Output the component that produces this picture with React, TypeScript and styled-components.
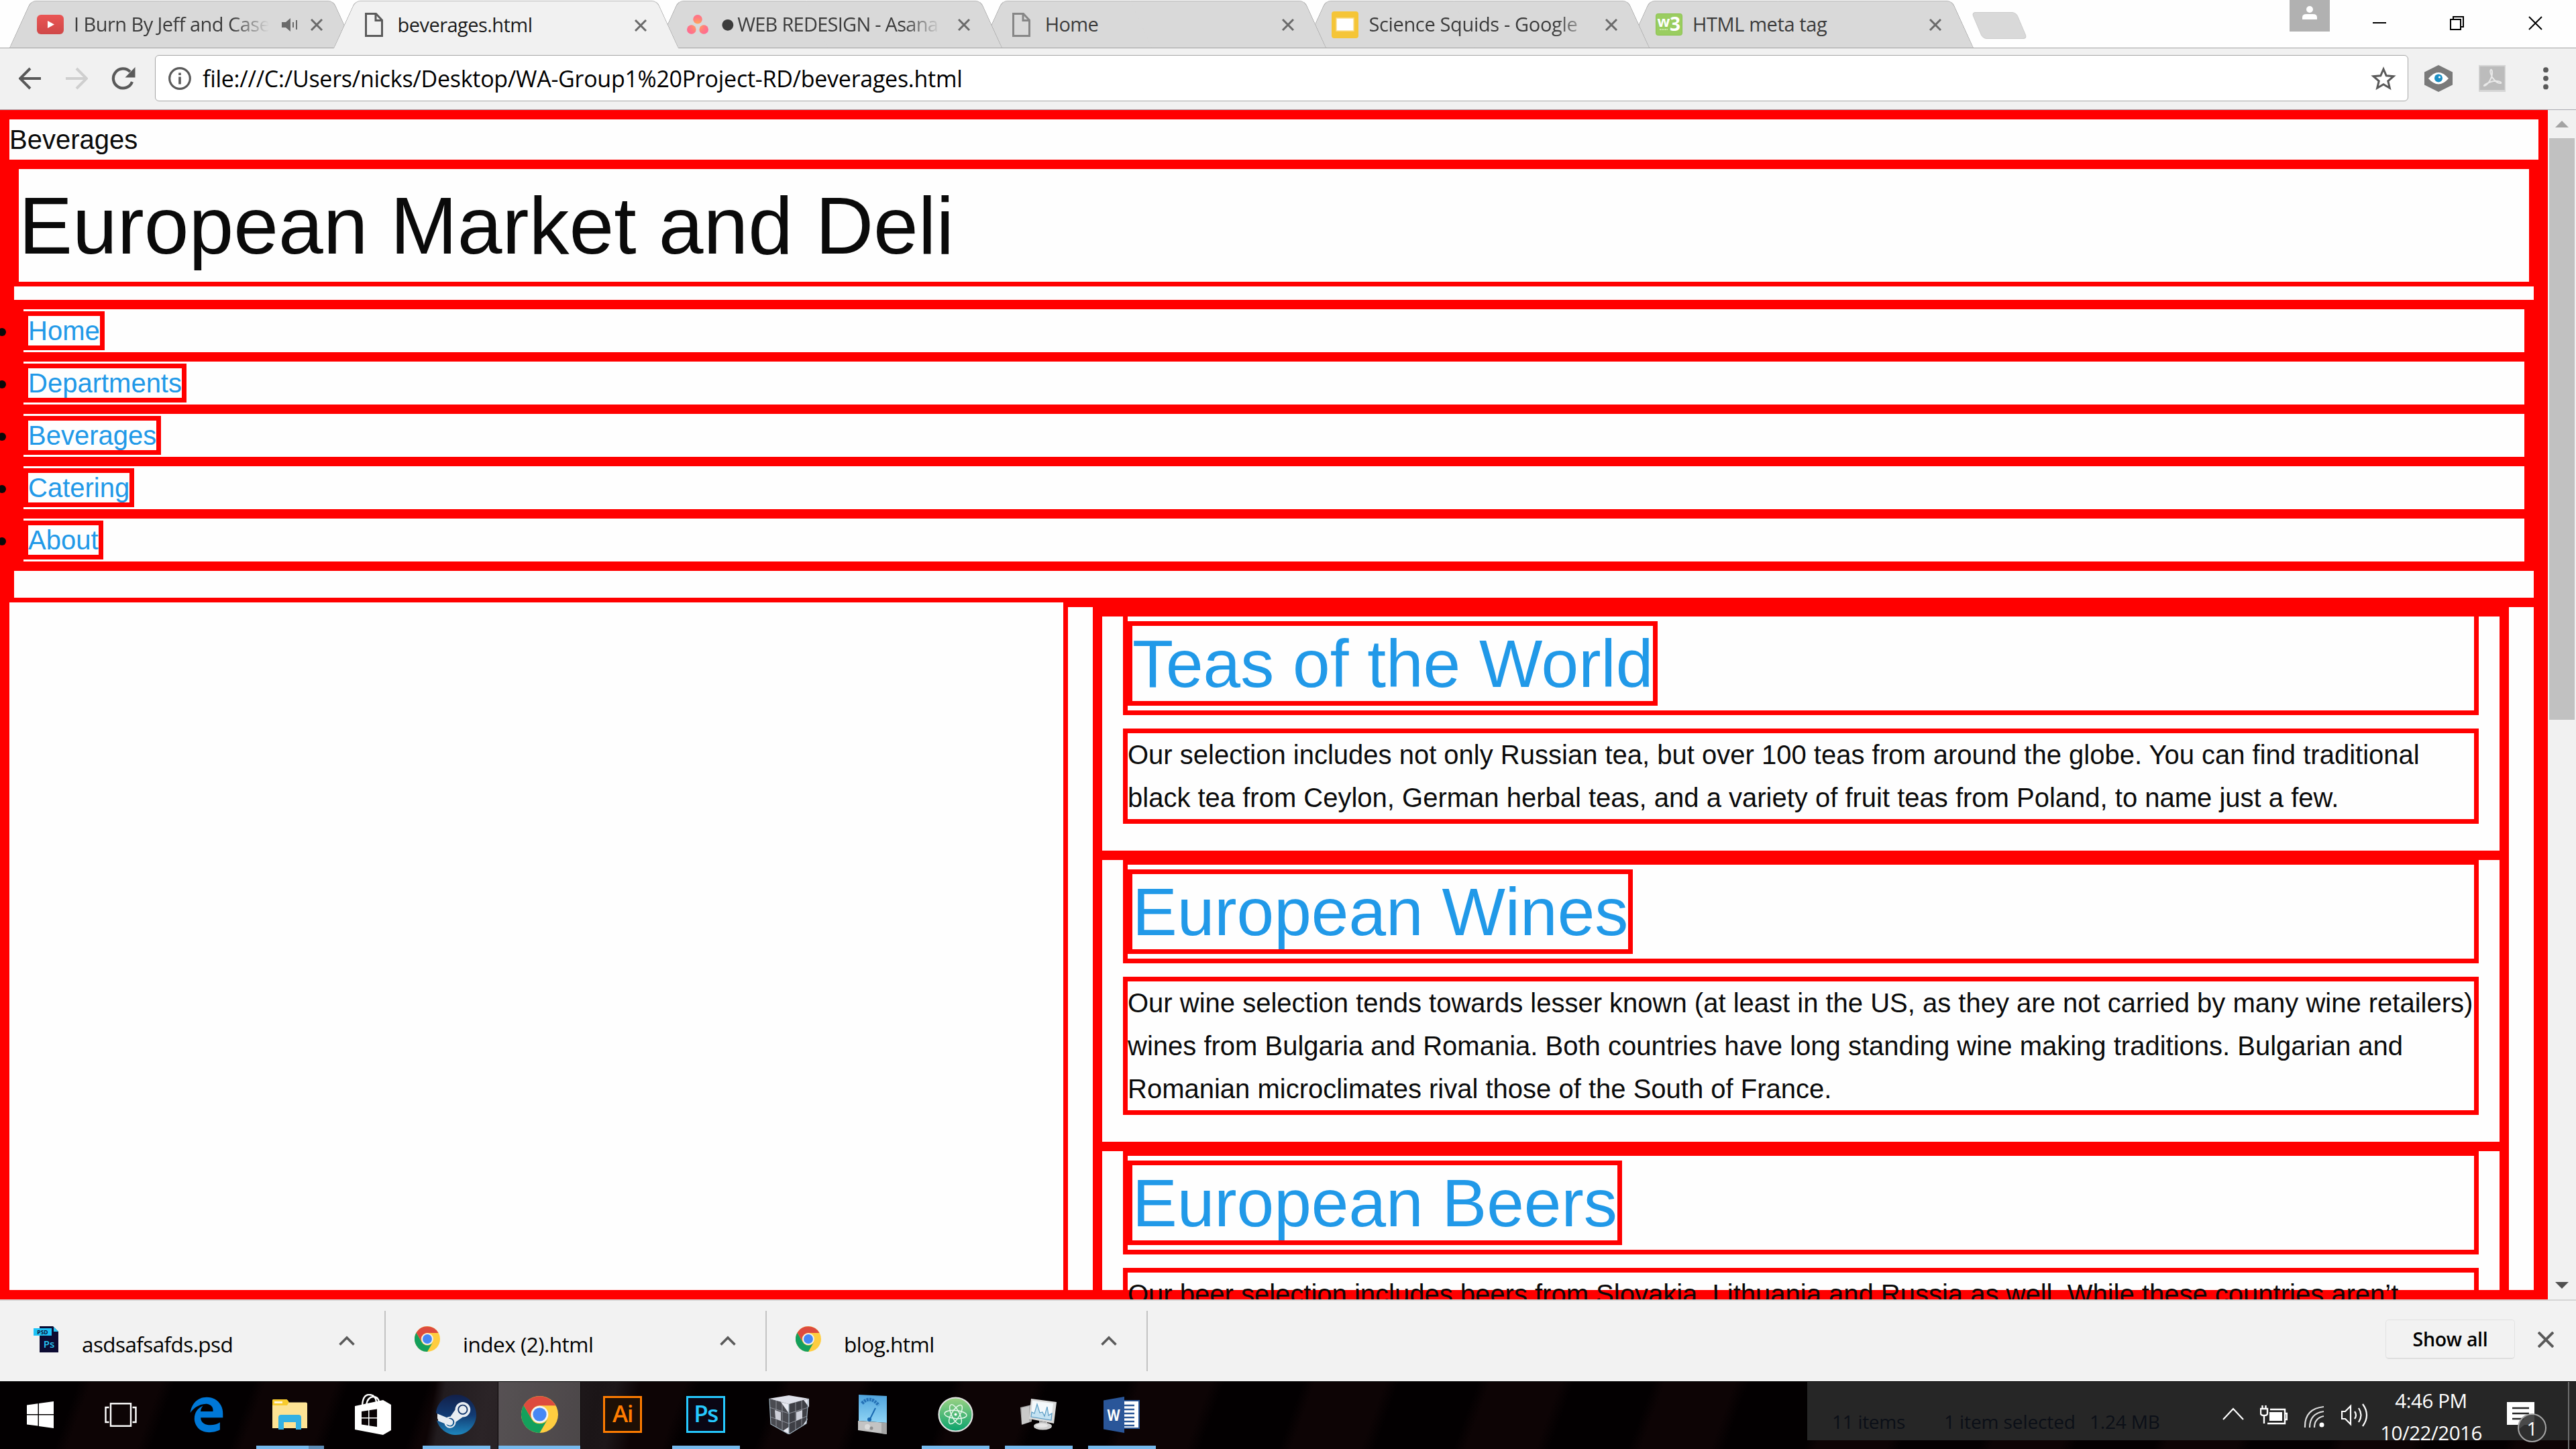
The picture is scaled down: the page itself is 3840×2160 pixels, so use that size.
import React from 'react';
import styled, { createGlobalStyle, css } from 'styled-components';
import { FaEdgeLegacy, FaSteam } from 'react-icons/fa';

const UI = `"Open Sans", "Noto Sans", sans-serif`;
const RED = '#ff0000';

const Global = createGlobalStyle`
  *, *::before, *::after { box-sizing: border-box; }
  body { margin: 0; background: #fefefe; overflow: hidden; }
`;

const Screen = styled.div`
  width: 3840px;
  height: 2160px;
  display: flex;
  flex-direction: column;
  overflow: hidden;
  font-family: ${UI};
`;

/* ---------- text with tuned tracking ---------- */
const Label = styled.span<{ $size: number; $ls?: number; $color?: string; $weight?: number; $grow?: boolean }>`
  font-size: ${p => p.$size}px;
  letter-spacing: ${p => p.$ls ?? 0}px;
  color: ${p => p.$color ?? '#000'};
  font-weight: ${p => p.$weight ?? 400};
  line-height: 1;
  white-space: pre;
  ${p => p.$grow && css`flex: 1;`}
`;

/* ---------- tab strip ---------- */
const TabStrip = styled.div`
  height: 72px;
  flex: none;
  display: flex;
  padding-left: 14px;
  background: #fefefe;
  border-bottom: 1px solid #9f9f9f;
`;

const TabBox = styled.div<{ $active?: boolean; $z: number }>`
  position: relative;
  z-index: ${p => p.$z};
  width: 515px;
  height: ${p => (p.$active ? 72 : 71)}px;
  margin-right: -32.4px;
  flex: none;
  display: flex;
  align-items: center;
  padding-left: 41px;
  &::before, &::after {
    content: '';
    position: absolute;
    z-index: -1;
    top: 1px;
    bottom: 0;
    width: 50.5%;
    background: ${p => (p.$active ? '#f1f1f1' : '#d9d9d9')};
    border-top: 1px solid #b9b9b9;
  }
  &::before {
    left: 0;
    border-left: 1px solid #a6a6a6;
    border-top-left-radius: 8px;
    transform-origin: left bottom;
    transform: skewX(-24.5deg);
  }
  &::after {
    right: 0;
    border-right: 1px solid #a6a6a6;
    border-top-right-radius: 8px;
    transform-origin: right bottom;
    transform: skewX(24.5deg);
  }
`;

const TabIcon = styled.div`
  width: 40px;
  height: 44px;
  margin-top: 2px;
  display: grid;
  place-items: center;
`;

const TabTitle = styled.div<{ $w: number; $fade?: boolean }>`
  width: ${p => p.$w}px;
  margin-left: 15px;
  overflow: hidden;
  white-space: nowrap;
  height: 60px;
  display: flex;
  align-items: center;
  ${p => p.$fade && css`mask-image: linear-gradient(to right, #000 calc(100% - 56px), transparent 100%);`}
`;

const Bullet = styled.span`
  font: 22px/1 "DejaVu Sans", sans-serif;
  color: #3c3c3c;
  width: 24px;
  flex: none;
`;

const TabEnd = styled.div`
  margin-left: auto;
  margin-right: 48px;
  display: flex;
  align-items: center;
  gap: 19px;
  padding-top: 3px;
`;

const NewTab = styled.div`
  width: 67px;
  height: 40px;
  margin: 18px 0 0 37px;
  background: #d9d9d9;
  border: 1px solid #cbcbcb;
  border-radius: 6px;
  transform: skewX(23deg);
`;

const WindowControls = styled.div`
  margin-left: auto;
  display: flex;
  align-items: flex-start;
`;
const Avatar = styled.div`
  width: 60px;
  height: 47px;
  margin-right: 15px;
  background: #b1b1b1;
  display: flex;
  justify-content: center;
  padding-top: 9px;
`;
const ControlSlot = styled.div<{ $w: number }>`
  width: ${p => p.$w}px;
  height: 68px;
  display: grid;
  place-items: center;
`;

/* ---------- toolbar ---------- */
const Toolbar = styled.div`
  height: 92px;
  flex: none;
  display: flex;
  align-items: center;
  padding: 0 36px 2px 28px;
  background: #f1f1f1;
  border-bottom: 1px solid #a9a9b0;
`;
const Nav = styled.div`
  width: 203px;
  display: flex;
  gap: 35px;
`;
const Omnibox = styled.div`
  flex: 1;
  height: 69px;
  display: flex;
  align-items: center;
  padding: 0 17px 0 19px;
  gap: 17px;
  background: #fff;
  border: 1.5px solid #a6a6a6;
  border-radius: 6px;
`;
const Extensions = styled.div`
  width: 214px;
  display: flex;
  align-items: center;
  padding-left: 24px;
  gap: 39px;
  & > :last-child { margin-left: 16px; }
`;

/* ---------- page ---------- */
const Viewport = styled.div`
  height: 1773px;
  flex: none;
  display: flex;
  overflow: hidden;
`;
const PageBody = styled.div`
  width: 3798px;
  height: 1773px;
  border: 7px solid ${RED};
  background: #fefefe;
  color: #0a0a0a;
  font: 40px/60px "Liberation Sans", Arial, sans-serif;
`;
const PageWrap = styled.div`
  height: 100%;
  border: 7px solid ${RED};
`;
const Header = styled.header`
  border: 7px solid ${RED};
`;
const SiteTitle = styled.h1`
  margin: 0 0 20px;
  border: 7px solid ${RED};
  font-weight: 400;
  font-size: 120px;
  line-height: 168px;
`;
const Menu = styled.ul`
  margin: 0 0 40px;
  padding: 0;
  border: 7px solid ${RED};
  line-height: 64px;
`;
const MenuItem = styled.li`
  border: 7px solid ${RED};
  height: 78px;
`;
const Link = styled.a`
  border: 7px solid ${RED};
  color: #2199e8;
`;
const Main = styled.div`
  display: flex;
  justify-content: flex-end;
`;
const Column = styled.div`
  width: 2199px;
  border: 7px solid ${RED};
  border-bottom: 0;
  padding: 0 37px;
`;
const Posts = styled.div`
  border: 7px solid ${RED};
  border-bottom: 0;
`;
const Post = styled.article`
  border: 7px solid ${RED};
  padding: 0 31px;
  &:first-child > h2 { margin-top: -7px; }
`;
const PostTitle = styled.h2`
  margin: 0 0 20px;
  border: 7px solid ${RED};
  font-weight: 400;
  font-size: 100px;
  line-height: 140px;
`;
const PostText = styled.p`
  margin: 0 0 40px;
  border: 7px solid ${RED};
  line-height: 64px;
  white-space: pre;
`;

const Scrollbar = styled.div`
  width: 42px;
  background: #f1f1f1;
  display: flex;
  flex-direction: column;
  align-items: center;
`;
const ScrollButton = styled.div`
  height: 42px;
  display: grid;
  place-items: center;
`;
const Thumb = styled.div`
  width: 38px;
  height: 867px;
  background: #c1c1c1;
  margin-bottom: auto;
`;

/* ---------- download shelf ---------- */
const Shelf = styled.div`
  height: 122px;
  flex: none;
  display: flex;
  background: #f2f2f2;
  border-top: 2px solid #d5d5d5;
  padding-left: 7px;
`;
const Download = styled.div`
  width: 568px;
  height: 90px;
  margin-top: 15px;
  display: flex;
  align-items: flex-start;
  border-right: 2px solid #c3c3c3;
  padding-left: 43px;
`;
const DownloadIcon = styled.div`
  width: 38px;
  height: 40px;
  margin-top: 23px;
`;
const DownloadName = styled.div`
  margin: 34px 0 0 34px;
  flex: 1;
  line-height: 0;
`;
const DownloadChevron = styled.div`
  margin: 37px 44px 0 0;
  line-height: 0;
`;
const ShelfEnd = styled.div`
  margin-left: auto;
  display: flex;
  align-items: center;
  gap: 34px;
  padding: 0 33px 5px 0;
`;
const ShowAll = styled.div`
  width: 193px;
  height: 59px;
  display: grid;
  place-items: center;
  border: 1px solid #e2e2e2;
  border-bottom: 2px solid #dedede;
  border-radius: 5px;
`;

/* ---------- taskbar ---------- */
const Taskbar = styled.div`
  flex: 1;
  display: flex;
  border-top: 1px solid #000;
  background:
    linear-gradient(100deg, transparent 640px, #221c1f 655px, #2b2427 720px, #1b1517 880px, #1d1719 905px, transparent 940px),
    repeating-linear-gradient(110deg, #030001 0 110px, #0d0405 128px 225px, #030001 245px);
`;
const Task = styled.div<{ $active?: boolean; $w: number; $shift: number }>`
  width: ${p => p.$w}px;
  padding-left: ${p => Math.max(p.$shift, 0)}px;
  padding-right: ${p => Math.max(-p.$shift, 0)}px;
  display: flex;
  flex-direction: column;
  align-items: center;
  ${p => p.$active && css`
    background: rgba(255, 255, 255, 0.21);
    box-shadow: inset 1px 0 #0a0607, inset -1px 0 #0a0607;
  `}
`;
const TaskIcon = styled.div`
  height: 95px;
  padding-top: 2px;
  display: grid;
  place-items: center;
`;
const Underline = styled.div<{ $w: number; $split?: boolean }>`
  width: ${p => p.$w}px;
  height: 5px;
  background: ${p => (p.$split ? 'linear-gradient(to right, #76b9ed 78px, #5b8bb5 78px)' : '#76b9ed')};
`;
const AppTile = styled.div<{ $c: string; $bg: string }>`
  width: 58px;
  height: 55px;
  margin-bottom: 1px;
  border: 3px solid ${p => p.$c};
  background: ${p => p.$bg};
  color: ${p => p.$c};
  display: grid;
  place-items: center;
  font: 600 35px/1 ${UI};
  letter-spacing: -1.5px;
  padding-bottom: 3px;
`;
const SteamBadge = styled.div`
  width: 60px;
  height: 60px;
  border-radius: 50%;
  background: radial-gradient(circle, #e8edf2 0 66%, transparent 67%);
  svg { display: block; width: 60px; height: 62px; margin-top: -1px; fill: url(#steamBlue); }
`;
const Tray = styled.div`
  margin-left: auto;
  width: 1146px;
  height: 100%;
  display: flex;
  background: linear-gradient(#262626 87px, transparent 87px);
`;
const Status = styled.div`
  width: 619px;
  padding: 45px 0 0 37px;
  display: flex;
  line-height: 0;
`;
const StatusItem = styled.div<{ $w: number }>`
  width: ${p => p.$w}px;
`;
const TrayIcons = styled.div`
  width: 231px;
  display: flex;
  gap: 24px;
  padding-top: 31px;
`;
const Clock = styled.div`
  width: 160px;
  display: flex;
  flex-direction: column;
  align-items: center;
  padding-top: 13px;
  gap: 18px;
`;
const Notify = styled.div`
  position: relative;
  margin: 30px 0 0 33px;
`;
const Badge = styled.div`
  position: absolute;
  left: 16px;
  top: 17px;
  width: 43px;
  height: 43px;
  border-radius: 50%;
  border: 2px solid #a5a5a5;
  background: rgba(48, 48, 48, 0.88);
  display: grid;
  place-items: center;
`;
const ShowDesktop = styled.div`
  margin-left: auto;
  width: 12px;
  border-left: 2px solid #6d6d6d;
`;

/* ---------- icons ---------- */
const Cross = ({ s = 18, w = 3, c = '#6a6a6a' }: { s?: number; w?: number; c?: string }) => (
  <svg width={s} height={s} viewBox={`0 0 ${s} ${s}`} stroke={c} strokeWidth={w}>
    <path d={`M1 1L${s - 1} ${s - 1}M${s - 1} 1L1 ${s - 1}`} />
  </svg>
);
const FileIcon = ({ c }: { c: string }) => (
  <svg width="27" height="36" viewBox="0 0 27 36" fill="none" stroke={c} strokeWidth="3">
    <path d="M1.5 1.5H16.5L25.5 11V34.5H1.5Z" />
    <path d="M16 2V11.5H25" />
  </svg>
);
const YouTube = () => (
  <svg width="40" height="29" viewBox="0 0 40 29">
    <defs><linearGradient id="yt" x2="0" y2="1"><stop stopColor="#ea5554" /><stop offset="1" stopColor="#cf4848" /></linearGradient></defs>
    <rect width="40" height="29" rx="6" fill="url(#yt)" />
    <path d="M16 9L26 14.5L16 20Z" fill="#fff" />
  </svg>
);
const Asana = () => (
  <svg width="32" height="29" viewBox="0 0 32 29">
    <defs><radialGradient id="as" gradientUnits="userSpaceOnUse" cx="16" cy="15" r="18"><stop stopColor="#ffb050" /><stop offset=".6" stopColor="#ff7b80" /><stop offset="1" stopColor="#ff6a92" /></radialGradient></defs>
    <g fill="url(#as)"><circle cx="16" cy="6.8" r="6.8" /><circle cx="6.8" cy="22" r="6.8" /><circle cx="25.2" cy="22" r="6.8" /></g>
  </svg>
);
const Slides = () => (
  <svg width="40" height="40" viewBox="0 0 40 40">
    <rect width="40" height="40" rx="4" fill="#f5c537" />
    <rect x="7" y="10" width="26" height="19" fill="#fff" stroke="#f9dc8a" strokeWidth="1.5" />
  </svg>
);
const W3 = () => (
  <svg width="40" height="33" viewBox="0 0 40 33">
    <rect x=".5" y=".5" width="39" height="32" rx="3" fill="#9acd60" stroke="#8bc34e" />
    <g fill="#fff" fontFamily="Open Sans" fontWeight="700">
      <text x="2.500" y="20" fontSize="22">w</text>
      <text x="21" y="26" fontSize="28">3</text>
    </g>
    <path d="M6 24H18" stroke="#d8eebf" strokeWidth="1.500" strokeDasharray="2 .7" />
  </svg>
);
const Speaker = () => (
  <svg width="24" height="22" viewBox="0 0 24 22" fill="#6a6a6a">
    <path d="M0 7H6L13 1V21L6 15H0Z" />
    <path d="M16 7H18V15H16Z M21 4H23V18H21Z" />
  </svg>
);
const Arrow = ({ c, flip }: { c: string; flip?: boolean }) => (
  <svg width="34" height="34" viewBox="0 0 34 34" fill="none" stroke={c} strokeWidth="4">
    <path d={flip ? 'M1 17H31M17 2L32 17L17 32' : 'M33 17H3M17 2L2 17L17 32'} />
  </svg>
);
const Reload = () => (
  <svg width="36" height="34" viewBox="0 0 36 34">
    <path d="M31 22A14.500 14.500 0 1 1 28 7" fill="none" stroke="#5a5a5a" strokeWidth="4.2" />
    <path d="M35.500 0V15.500H20.500Z" fill="#5a5a5a" />
  </svg>
);
const Info = () => (
  <svg width="34" height="34" viewBox="0 0 34 34">
    <circle cx="17" cy="17" r="15.3" fill="none" stroke="#5a5a5a" strokeWidth="3.2" />
    <path d="M15.2 8.5H18.8V12H15.2Z M15.2 14.5H18.8V25.5H15.2Z" fill="#5a5a5a" />
  </svg>
);
const Star = () => (
  <svg width="38" height="36" viewBox="0 0 38 36" fill="none" stroke="#5a5a5a" strokeWidth="3">
    <path d="M19 4L23.2 13.8L34 14.7L25.8 21.8L28.3 32.2L19 26.7L9.7 32.2L12.2 21.8L4 14.7L14.8 13.8Z" />
  </svg>
);
const HexEye = () => (
  <svg width="42" height="40" viewBox="0 0 42 40">
    <path d="M21 0L42 10.5V29.5L21 40L0 29.5V10.5Z" fill="#7a7a7a" />
    <path d="M6 20Q21 2 36 20Q21 37 6 20Z" fill="#fff" />
    <circle cx="21" cy="19.5" r="6" fill="#1c8fc4" /><circle cx="22.5" cy="18" r="1.6" fill="#fff" />
  </svg>
);
const Pdf = () => (
  <svg width="40" height="40" viewBox="0 0 40 40">
    <rect width="40" height="40" fill="#d5d5d5" /><rect x="1.5" y="2" width="37" height="35" fill="#bcbcbc" />
    <path d="M8 31C14 30 21 18 20 9C19 5 16 7 18 13C20 20 27 28 33 27C35 25 27 22 18 25C12 27 7 30 8 31Z" fill="none" stroke="#e8e8e8" strokeWidth="2" />
  </svg>
);
const Dots = () => (
  <svg width="10" height="34" viewBox="0 0 10 34" fill="#5a5a5a">
    <circle cx="5" cy="4.2" r="3.9" /><circle cx="5" cy="16.8" r="3.9" /><circle cx="5" cy="29.4" r="3.9" />
  </svg>
);
const Chrome = ({ s }: { s: number }) => (
  <svg width={s} height={s} viewBox="0 0 48 48">
    <circle cx="24" cy="24" r="24" fill="#ffcd40" />
    <path d="M3.2 12L13.6 30A12 12 0 0 0 34.4 30L24 48A24 24 0 0 1 3.2 12Z" fill="#14a05c" />
    <path d="M3.2 12A24 24 0 0 1 44.8 12.5H24A12 12 0 0 0 13.6 30Z" fill="#dd4b3e" />
    <circle cx="24" cy="24" r="11.2" fill="#f4f4f4" /><circle cx="24" cy="24" r="8.8" fill="#4687f4" />
  </svg>
);
const PsdFile = () => (
  <svg width="38" height="40" viewBox="0 0 38 40">
    <path d="M9 0H29L37 8V39H9Z" fill="#0c0b33" /><path d="M30 1L37 8H30Z" fill="#27c5f5" />
    <rect y="3" width="27" height="11" fill="#1ec2f7" />
    <text x="13.5" y="11.6" fontSize="8.5" fontWeight="700" textAnchor="middle" fill="#0c0b33" fontFamily="Open Sans">PSD</text>
    <text x="23" y="32" fontSize="15" fontWeight="600" textAnchor="middle" fill="#27c5f5" fontFamily="Open Sans">Ps</text>
  </svg>
);
const Chevron = () => (
  <svg width="24" height="15" viewBox="0 0 24 15" fill="none" stroke="#5a5a5a" strokeWidth="3.6"><path d="M1.5 13.5L12 3L22.5 13.5" /></svg>
);
const WindowsLogo = () => (
  <svg width="40" height="40" viewBox="0 0 40 40" fill="#fff">
    <path d="M0 5.5L16.5 3.2V19H0Z M18 3L40 0V19H18Z M0 20.5H16.5V36.6L0 34.4Z M18 20.5H40V40L18 37Z" />
  </svg>
);
const TaskView = () => (
  <svg width="48" height="36" viewBox="0 0 48 36" fill="none" stroke="#fff" strokeWidth="2.4">
    <rect x="9" y="1.3" width="30" height="33.4" /><path d="M6.5 7H1.5V29H6.5M41.5 7H46.5V29H41.5" />
  </svg>
);
const Folder = () => (
  <svg width="52" height="45" viewBox="0 0 52 45">
    <path d="M0 2Q0 0 2 0H20Q23 0 24.5 4.5H50Q52 4.5 52 6.5V43H0Z" fill="#fde394" />
    <path d="M0 2Q0 0 2 0H20Q23 0 24.5 4.5L22 9H0Z" fill="#f8cb2e" /><rect x="3" y="3" width="12" height="3" fill="#fff6d8" />
    <path d="M9 45V27Q9 23 13 23H39Q43 23 43 27V45H35V34H17V45Z" fill="#33b1e4" />
  </svg>
);
const Store = () => (
  <svg width="54" height="61" viewBox="0 0 54 61">
    <path d="M11 17Q12 1 21 1Q31 1 32 12M17 16Q19 5 27 4Q35 4 36 12" fill="none" stroke="#fff" strokeWidth="2.4" />
    <path d="M0 18L42 9L54 16V54L42 61L0 53Z" fill="#fff" />
    <path d="M10 26L20 24.5V35H10Z M21.5 24.2L33 22.5V35H21.5Z M10 36.5H20V47L10 45.5Z M21.5 36.5H33V49L21.5 47.2Z" fill="#0a0405" />
  </svg>
);
const Cube = () => (
  <svg width="60" height="58" viewBox="0 0 60 58">
    <path d="M0 5L30 0L60 5L30 14Z" fill="#dfe1ea" />
    <path d="M1 5L30 13V58L3 43Z" fill="#4a4b51" /><path d="M30 13L59 5L56 42L30 58Z" fill="#3e3f45" />
    <g stroke="#8d9099" strokeWidth="1"><path d="M1 18L30 27L59 18M2 32L30 42L57 31M11 8V47M20 10V52M40 10V52M49 8V47" fill="none" /></g>
    <path d="M9 22L18 25V38L10 35Z M41 25L50 22V34L41 38Z" fill="#cdcfd8" />
    <path d="M18 10L30 13V27Z M52 7L60 5V18Z M58 34L56 42L50 46Z M21 53L30 47V58Z" fill="#e8eaf2" />
    <path d="M1 5L3 43L30 58L56 42L59 5M30 13V58" fill="none" stroke="#9fb0bd" strokeWidth="1.2" />
  </svg>
);
const Gauge = () => (
  <svg width="43" height="59" viewBox="0 0 43 59">
    <defs><linearGradient id="ga" x2="0" y2="1"><stop stopColor="#4fa3dc" /><stop offset="1" stopColor="#8fd4f5" /></linearGradient></defs>
    <path d="M1 0L43 2V42L1 39Z" fill="url(#ga)" /><path d="M0 39L43 42V59L0 53Z" fill="#c3c3c3" />
    <path d="M35 42L43 42V59L35 58Z" fill="#a5a5a5" />
    <path d="M6 13Q18 0 31 16" fill="none" stroke="#2470b5" strokeWidth="5" strokeDasharray="3 1.2" />
    <path d="M26 20L17 38" stroke="#1767b0" strokeWidth="2" /><circle cx="17" cy="37" r="3" fill="#1767b0" />
    <circle cx="14" cy="48" r="4" fill="#dcdcdc" /><circle cx="20" cy="50" r="2.5" fill="#8b8b8b" />
  </svg>
);
const Atom = () => (
  <svg width="53" height="53" viewBox="0 0 53 53">
    <defs><linearGradient id="at" x2="0" y2="1"><stop stopColor="#9bd284" /><stop offset="1" stopColor="#0aa26c" /></linearGradient></defs>
    <circle cx="26.5" cy="26.5" r="25" fill="url(#at)" stroke="#e3e3e3" strokeWidth="2.2" />
    <g fill="none" stroke="#e6f7ea" strokeWidth="1.5">
      <ellipse cx="26.5" cy="26.5" rx="16.5" ry="6" transform="rotate(5 26.5 26.5)" />
      <ellipse cx="26.5" cy="26.5" rx="16" ry="6" transform="rotate(64 26.5 26.5)" />
      <ellipse cx="26.5" cy="26.5" rx="16" ry="6" transform="rotate(-58 26.5 26.5)" />
    </g>
    <circle cx="26.5" cy="26.5" r="2" fill="#fff" />
  </svg>
);
const Monitor = () => (
  <svg width="54" height="47" viewBox="0 0 54 47">
    <path d="M0 13L17 9V34L2 39Z" fill="#a9a9a9" /><path d="M2 14L13 11V35L2 38Z" fill="#c9c9c9" />
    <path d="M16 0L54 5L50 37L13 30Z" fill="#dadada" /><path d="M18 3L49 7L46 32L16 27Z" fill="#f4f9fc" />
    <path d="M16 27L17 20L21 22L25 8L29 21L33 20L36 26L40 12L42 25L47 22L46 32Z" fill="#c4e2f2" stroke="#5b9cc4" strokeWidth="1.2" />
    <path d="M28 33L40 35V40H28Z" fill="#b5b5b5" /><ellipse cx="33.5" cy="41" rx="13.5" ry="5.6" fill="#cfcfcf" /><ellipse cx="32" cy="40" rx="9" ry="3" fill="#e6e6e6" />
  </svg>
);
const Word = () => (
  <svg width="54" height="54" viewBox="0 0 54 54">
    <rect x="28" y="6" width="25" height="41" fill="#fff" stroke="#2b5797" strokeWidth="2" />
    <path d="M30 13H46M30 19H46M30 25H46M30 31H46M30 37H46M30 43H46" stroke="#2b5797" strokeWidth="2.6" />
    <path d="M0 5.5L31 0V54L0 48.5Z" fill="#2a5699" />
    <text x="15" y="36" fontSize="24" fontWeight="700" textAnchor="middle" textLength="19" lengthAdjust="spacingAndGlyphs" fill="#fff" fontFamily="Open Sans">W</text>
  </svg>
);

const TABS = [
  { title: 'I Burn By Jeff and Case', icon: <YouTube />, w: 291, fade: true, audio: true, ls: -0.55 },
  { title: 'beverages.html', icon: <FileIcon c="#5a5a5a" />, w: 330, active: true, ls: -0.55 },
  { title: 'WEB REDESIGN - Asana', bullet: true, icon: <Asana />, w: 328, fade: true, ls: -0.75 },
  { title: 'Home', icon: <FileIcon c="#868686" />, w: 330, ls: -0.65 },
  { title: 'Science Squids - Google', icon: <Slides />, w: 335, fade: true, ls: -0.35 },
  { title: 'HTML meta tag', icon: <W3 />, w: 330, ls: -0.4 },
];

const POSTS = [
  {
    title: 'Teas of the World',
    text: 'Our selection includes not only Russian tea, but over 100 teas from around the globe. You can find traditional\nblack tea from Ceylon, German herbal teas, and a variety of fruit teas from Poland, to name just a few.',
  },
  {
    title: 'European Wines',
    text: 'Our wine selection tends towards lesser known (at least in the US, as they are not carried by many wine retailers)\nwines from Bulgaria and Romania. Both countries have long standing wine making traditions. Bulgarian and\nRomanian microclimates rival those of the South of France.',
  },
  {
    title: 'European Beers',
    text: 'Our beer selection includes beers from Slovakia, Lithuania and Russia as well. While these countries aren’t',
  },
];

const DOWNLOADS = [
  { name: 'asdsafsafds.psd', icon: <PsdFile />, ls: -0.6 },
  { name: 'index (2).html', icon: <Chrome s={38} />, ls: -0.5 },
  { name: 'blog.html', icon: <Chrome s={38} />, ls: -0.5 },
];

const TASKS: { icon: React.ReactNode; w?: number; shift?: number; line?: number; active?: boolean; split?: boolean }[] = [
  { icon: <WindowsLogo />, w: 118, shift: 2 },
  { icon: <TaskView />, w: 128, shift: -4 },
  { icon: <FaEdgeLegacy size={54} color="#0078d7" /> },
  { icon: <Folder />, line: 101, split: true },
  { icon: <Store /> },
  { icon: <SteamBadge><FaSteam /></SteamBadge>, line: 101 },
  { icon: <Chrome s={55} />, line: 122, active: true },
  { icon: <AppTile $c="#ff7c00" $bg="#1d0f05">Ai</AppTile> },
  { icon: <AppTile $c="#26c9ff" $bg="#0a0614">Ps</AppTile>, line: 101 },
  { icon: <Cube /> },
  { icon: <Gauge /> },
  { icon: <Atom />, line: 101 },
  { icon: <Monitor />, line: 101 },
  { icon: <Word />, line: 101 },
];

export default function App() {
  return (
    <Screen>
      <Global />
      <TabStrip>
        {TABS.map((t, i) => (
          <TabBox key={t.title} $active={t.active} $z={t.active ? 20 : 10 - i}>
            <TabIcon>{t.icon}</TabIcon>
            <TabTitle $w={t.w} $fade={t.fade}>
              {t.bullet && <Bullet>●</Bullet>}
              <Label $size={29} $ls={t.ls} $color={t.active ? '#1c1c1c' : '#3c3c3c'}>{t.title}</Label>
            </TabTitle>
            <TabEnd>
              {t.audio && <Speaker />}
              <Cross />
            </TabEnd>
          </TabBox>
        ))}
        <NewTab />
        <WindowControls>
          <Avatar>
            <svg width="24" height="21" viewBox="0 0 24 21" fill="#fff"><circle cx="12" cy="5" r="5" /><path d="M1 20V17Q1 12 7 12H17Q23 12 23 17V20Z" /></svg>
          </Avatar>
          <ControlSlot $w={118}><svg width="20" height="2"><rect width="20" height="2" /></svg></ControlSlot>
          <ControlSlot $w={112}>
            <svg width="21" height="21" viewBox="0 0 21 21" fill="none" stroke="#000" strokeWidth="2"><rect x="1" y="5" width="15" height="15" /><path d="M5 5V1H20V16H16" /></svg>
          </ControlSlot>
          <ControlSlot $w={122}><Cross s={21} w={2} c="#000" /></ControlSlot>
        </WindowControls>
      </TabStrip>

      <Toolbar>
        <Nav>
          <Arrow c="#5a5a5a" />
          <Arrow c="#cfcfcf" flip />
          <Reload />
        </Nav>
        <Omnibox>
          <Info />
          <Label $size={34} $ls={-0.27} $grow>file:///C:/Users/nicks/Desktop/WA-Group1%20Project-RD/beverages.html</Label>
          <Star />
        </Omnibox>
        <Extensions>
          <HexEye />
          <Pdf />
          <Dots />
        </Extensions>
      </Toolbar>

      <Viewport>
        <PageBody>
          <PageWrap>
            Beverages
            <Header>
              <SiteTitle>European Market and Deli</SiteTitle>
              <Menu>
                {['Home', 'Departments', 'Beverages', 'Catering', 'About'].map(m => (
                  <MenuItem key={m}><Link>{m}</Link></MenuItem>
                ))}
              </Menu>
            </Header>
            <Main>
              <Column>
                <Posts>
                  {POSTS.map(p => (
                    <Post key={p.title}>
                      <PostTitle><Link>{p.title}</Link></PostTitle>
                      <PostText>{p.text}</PostText>
                    </Post>
                  ))}
                </Posts>
              </Column>
            </Main>
          </PageWrap>
        </PageBody>
        <Scrollbar>
          <ScrollButton><svg width="20" height="10"><path d="M10 0L20 10H0Z" fill="#a3a3a3" /></svg></ScrollButton>
          <Thumb />
          <ScrollButton><svg width="20" height="10"><path d="M0 0H20L10 10Z" fill="#505050" /></svg></ScrollButton>
        </Scrollbar>
      </Viewport>

      <Shelf>
        {DOWNLOADS.map(d => (
          <Download key={d.name}>
            <DownloadIcon>{d.icon}</DownloadIcon>
            <DownloadName><Label $size={31.5} $ls={d.ls}>{d.name}</Label></DownloadName>
            <DownloadChevron><Chevron /></DownloadChevron>
          </Download>
        ))}
        <ShelfEnd>
          <ShowAll><Label $size={28.5} $ls={-0.3} $weight={600}>Show all</Label></ShowAll>
          <Cross s={24} w={4} c="#5a5a5a" />
        </ShelfEnd>
      </Shelf>

      <Taskbar>
        <svg width="0" height="0">
          <defs><linearGradient id="steamBlue" x2="0" y2="1"><stop stopColor="#12204a" /><stop offset=".5" stopColor="#123a72" /><stop offset="1" stopColor="#1e86bd" /></linearGradient></defs>
        </svg>
        {TASKS.map((t, i) => (
          <Task key={i} $w={t.w ?? 124} $shift={t.shift ?? 0} $active={t.active}>
            <TaskIcon>{t.icon}</TaskIcon>
            {t.line && <Underline $w={t.line} $split={t.split} />}
          </Task>
        ))}
        <Tray>
          <Status>
            <StatusItem $w={167}><Label $size={28} $ls={-0.3} $color="#0b0f17">11 items</Label></StatusItem>
            <StatusItem $w={217}><Label $size={28} $ls={-0.1} $color="#0b0f17">1 item selected</Label></StatusItem>
            <StatusItem $w={120}><Label $size={28} $ls={-0.2} $color="#0b0f17">1.24 MB</Label></StatusItem>
          </Status>
          <TrayIcons>
            <svg width="32" height="37" viewBox="0 0 32 37" fill="none" stroke="#fff" strokeWidth="2.2"><path d="M1 25L16 9L31 25" /></svg>
            <svg width="41" height="37" viewBox="0 0 41 37" fill="none" stroke="#fff" strokeWidth="2.4">
              <path d="M15 10H37V31H11M38 16H40V25H38" /><rect x="14" y="14" width="19" height="13" fill="#fff" stroke="none" />
              <path d="M1 9H11V16Q11 19 6 19Q1 19 1 16ZM3.5 4V9M8.5 4V9M6 19V31" />
            </svg>
            <svg width="32" height="37" viewBox="0 0 32 37" fill="none" stroke="#fff" strokeWidth="2.2">
              <path d="M2 37Q1 9 30 6M9 37Q9 16 30 13M16 37Q16 23 30 20" opacity=".85" /><circle cx="27" cy="33" r="3.5" fill="#fff" stroke="none" />
            </svg>
            <svg width="42" height="37" viewBox="0 0 42 37" fill="none" stroke="#fff" strokeWidth="2.2">
              <path d="M1 13H6L14 5V32L6 24H1Z M20 13Q24 18.5 20 24M26 8Q33 18.5 26 29M32 2Q44 18.5 32 35" />
            </svg>
          </TrayIcons>
          <Clock>
            <Label $size={29.5} $ls={-0.4} $color="#fff">4:46 PM</Label>
            <Label $size={29.5} $ls={-0.5} $color="#fff">10/22/2016</Label>
          </Clock>
          <Notify>
            <svg width="42" height="42" viewBox="0 0 42 42"><path d="M0 0H41V34H26L17 41V34H0Z" fill="#fff" /><path d="M8 9H33M8 17H33M8 25H25" stroke="#262626" strokeWidth="2.4" /></svg>
            <Badge><Label $size={28} $color="#fff">1</Label></Badge>
          </Notify>
          <ShowDesktop />
        </Tray>
      </Taskbar>
    </Screen>
  );
}
